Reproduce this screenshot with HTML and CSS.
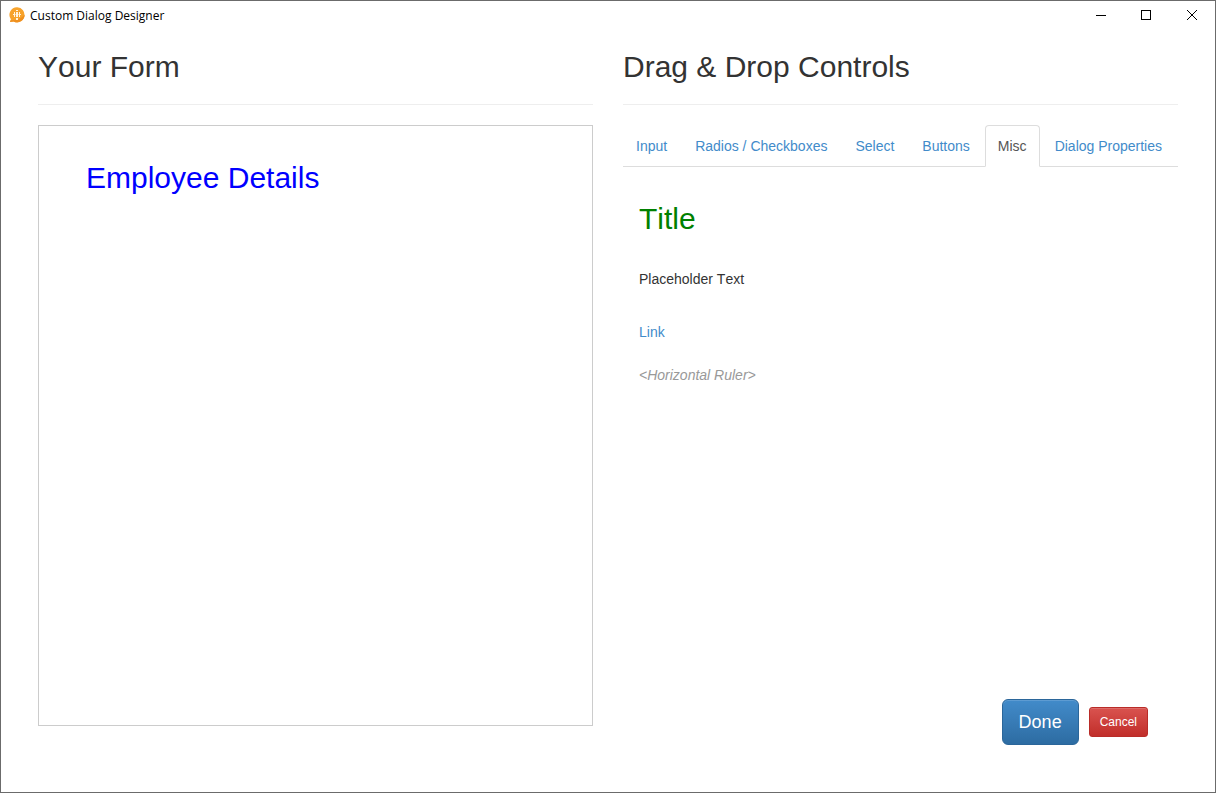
FILE: index.html
```html
<!DOCTYPE html>
<html lang="en">
<head>
<meta charset="utf-8">
<title>Custom Dialog Designer</title>
<link rel="stylesheet" href="styles.css">
</head>
<body>
<div class="window">
  <header class="titlebar">
    <svg class="app-icon" viewBox="0 0 16 16" aria-hidden="true">
      <path fill="#f7a32c" d="M8.200.3a7.500 7.500 0 1 1-3.600 14.2L1 15l.9-2.800A7.500 7.500 0 0 1 8.200.3z"/>
      <path fill="#ef901f" d="M15.700 7.800A7.500 7.500 0 0 1 4.600 14.500L1 15l.6-1.800C7 13.500 12 12 15.700 7.800z"/>
      <path fill="#fbd08d" d="M4 7h8v1H4z"/>
      <path fill="#fff3df" d="M5 5h1v2H5zM5 8h1v2H5zM4 7h2v1H4zM7 3h2v1H7zM7 5h2v5H7zM7 11h2v2H7zM10 5h1v2h-1zM10 8h1v2h-1zM10 7h2v1h-2z"/>
    </svg>
    <span class="titlebar-text">Custom Dialog Designer</span>
    <div class="window-controls">
      <button type="button" aria-label="Minimize"><svg viewBox="0 0 10 10"><path d="M1 5.500h10"/></svg></button>
      <button type="button" aria-label="Maximize"><svg viewBox="0 0 10 10"><path d="M.5.5h9v9h-9z"/></svg></button>
      <button type="button" aria-label="Close"><svg class="close" viewBox="0 0 10 10"><path d="M0 0l10 10M10 0L0 10"/></svg></button>
    </div>
  </header>
  <main class="columns">
    <section class="column">
      <h2 class="heading">Your Form</h2>
      <div class="form-canvas">
        <h2 class="form-title">Employee Details</h2>
      </div>
    </section>
    <section class="column">
      <h2 class="heading">Drag &amp; Drop Controls</h2>
      <nav class="tabs">
        <a class="tab" href="#input">Input</a>
        <a class="tab" href="#radios">Radios / Checkboxes</a>
        <a class="tab" href="#select">Select</a>
        <a class="tab" href="#buttons">Buttons</a>
        <a class="tab active" href="#misc" aria-current="page">Misc</a>
        <a class="tab" href="#properties">Dialog Properties</a>
      </nav>
      <div class="palette" id="misc">
        <h2 class="palette-title">Title</h2>
        <p class="palette-text">Placeholder Text</p>
        <a class="palette-link" href="#link">Link</a>
        <em class="palette-ruler">&lt;Horizontal Ruler&gt;</em>
      </div>
      <footer class="actions">
        <button type="button" class="btn btn-primary">Done</button>
        <button type="button" class="btn btn-danger">Cancel</button>
      </footer>
    </section>
  </main>
</div>
</body>
</html>
```
FILE: styles.css
```css
* {
  box-sizing: border-box;
}

body {
  margin: 0;
  background: #fff;
  color: #333;
  font: 14px/20px "Liberation Sans", Arial, sans-serif;
  font-kerning: none;
}

h2,
p {
  margin: 0;
  font-weight: normal;
}

h2 {
  font-size: 30px;
  line-height: 34px;
}

a {
  color: #428bca;
  text-decoration: none;
}

.window {
  display: flex;
  flex-direction: column;
  min-height: 100vh;
  border: 1px solid #6b6b6b;
}

.titlebar {
  display: flex;
  align-items: center;
  height: 28px;
  padding-left: 8px;
  color: #000;
  font-family: "Open Sans", "Noto Sans", sans-serif;
  font-size: 12px;
  line-height: 17px;
}

.app-icon {
  width: 16px;
  height: 16px;
  margin-right: 5px;
}

.window-controls {
  display: flex;
  margin-left: auto;
}

.window-controls button {
  display: flex;
  align-items: center;
  justify-content: center;
  width: 46px;
  height: 28px;
  padding: 0;
  border: 0;
  background: none;
}

.window-controls svg {
  width: 10px;
  height: 10px;
  overflow: visible;
  fill: none;
  stroke: #000;
  shape-rendering: crispEdges;
}

.window-controls .close {
  shape-rendering: auto;
}

.columns {
  display: grid;
  flex: 1;
  grid-template-columns: 1fr 1fr;
  gap: 30px;
  padding: 21px 37px 47px;
}

.column {
  display: flex;
  flex-direction: column;
  min-width: 0;
}

.heading {
  margin-bottom: 20px;
  padding-bottom: 20px;
  border-bottom: 1px solid #eee;
}

.form-canvas {
  flex: 1;
  margin-bottom: 19px;
  padding: 35px 47px;
  border: 1px solid #ccc;
}

.form-title {
  color: #00f;
}

.tabs {
  display: flex;
  gap: 2px;
  border-bottom: 1px solid #ddd;
}

.tab {
  margin-bottom: -1px;
  padding: 10px 12px;
  border: 1px solid transparent;
  border-radius: 4px 4px 0 0;
  white-space: nowrap;
}

.tab.active {
  border-color: #ddd;
  border-bottom-color: #fff;
  background: #fff;
  color: #555;
}

.palette {
  display: flex;
  flex: 1;
  flex-direction: column;
  align-items: flex-start;
  padding: 35px 16px;
}

.palette-title {
  margin-bottom: 33px;
  color: #008000;
}

.palette-text {
  margin-bottom: 33px;
}

.palette-link {
  margin-bottom: 23px;
}

.palette-ruler {
  color: #999;
}

.actions {
  display: flex;
  align-items: center;
  justify-content: flex-end;
  gap: 10px;
  padding-right: 30px;
}

.btn {
  border: 1px solid;
  color: #fff;
  font-family: inherit;
  box-shadow: inset 0 1px 0 rgba(255, 255, 255, 0.15);
}

.btn-primary {
  padding: 10px 16px;
  border-color: #2b669a;
  border-radius: 6px;
  background: linear-gradient(#428bca, #2d6ca2);
  font-size: 18px;
  line-height: 24px;
}

.btn-danger {
  padding: 5px 10px;
  border-color: #b92c28;
  border-radius: 3px;
  background: linear-gradient(#d9534f, #c12e2a);
  font-size: 12px;
  line-height: 18px;
}
```
